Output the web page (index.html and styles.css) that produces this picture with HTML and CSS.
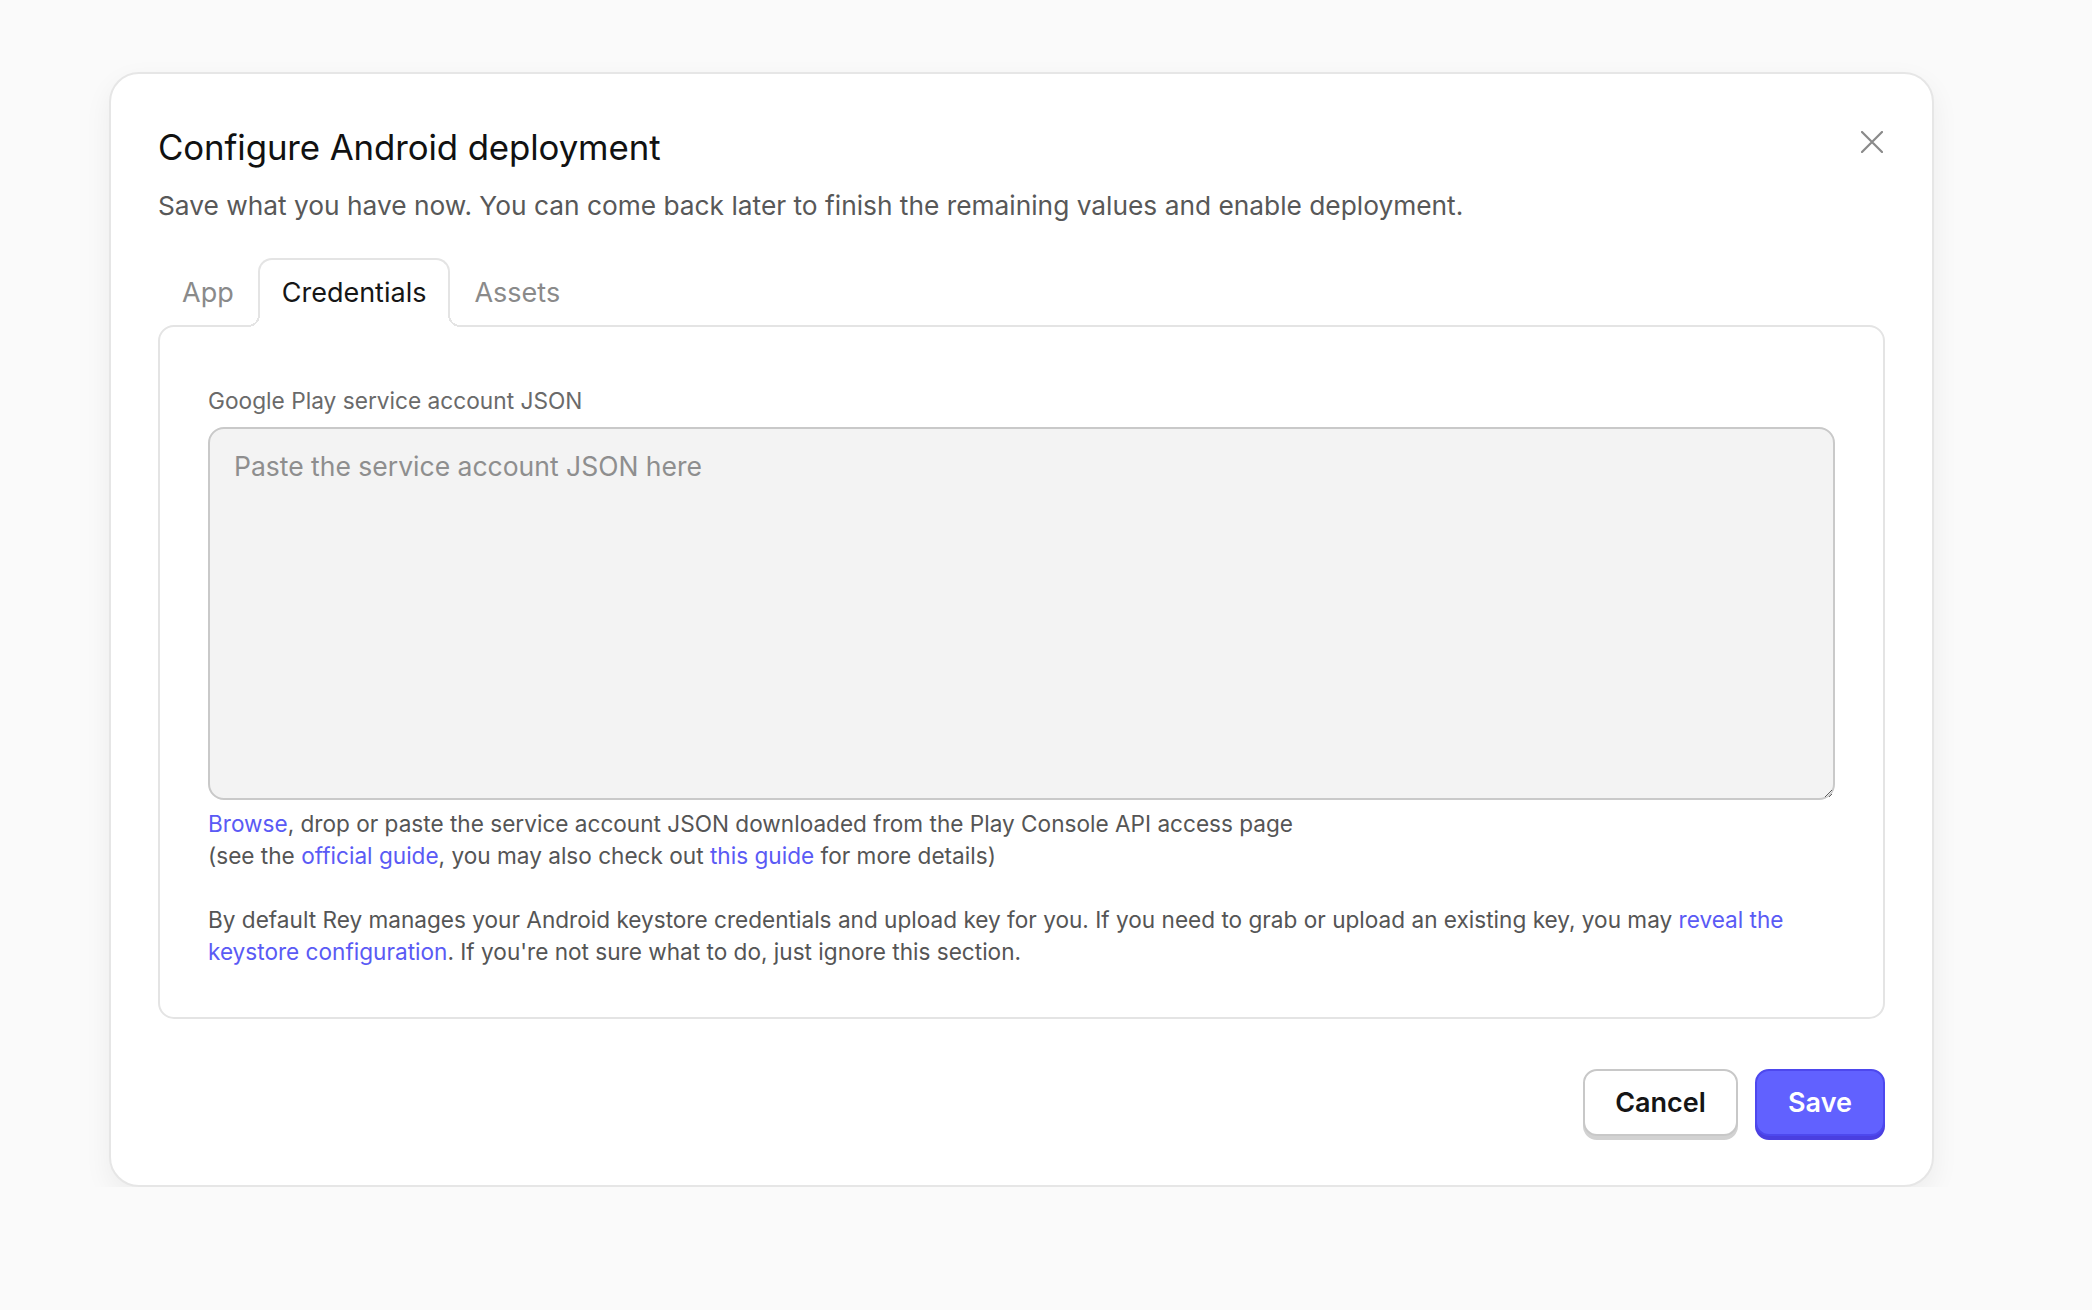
FILE: index.html
```html
<!DOCTYPE html>
<html lang="en">
<head>
<meta charset="utf-8">
<title>Configure Android deployment</title>
<link rel="stylesheet" href="styles.css">
</head>
<body>
<div class="modal">
  <button class="close" aria-label="Close">
    <svg width="22" height="22" viewBox="0 0 22 22"><path d="M1 1L21 21M21 1L1 21" stroke="#8a8a8a" stroke-width="2.2" stroke-linecap="round" fill="none"/></svg>
  </button>
  <h1 class="title">Configure Android deployment</h1>
  <p class="subtitle">Save what you have now. You can come back later to finish the remaining values and enable deployment.</p>
  <div class="tabs">
    <div class="tab">App</div>
    <div class="tab active">Credentials</div>
    <div class="tab">Assets</div>
  </div>
  <div class="panel">
    <label class="label">Google Play service account JSON</label>
    <textarea class="json" placeholder="Paste the service account JSON here"></textarea>
    <p class="help"><a>Browse</a>, drop or paste the service account JSON downloaded from the Play Console API access page<br>(see the <a>official guide</a>, you may also check out <a>this guide</a> for more details)</p>
    <p class="help note">By default Rey manages your Android keystore credentials and upload key for you. If you need to grab or upload an existing key, you may <a>reveal the keystore configuration</a>. If you're not sure what to do, just ignore this section.</p>
  </div>
  <div class="footer">
    <button class="btn cancel">Cancel</button>
    <button class="btn save">Save</button>
  </div>
</div>
</body>
</html>
```

FILE: styles.css
```css
* { box-sizing: border-box; }
html, body { margin: 0; padding: 0; }
body {
  background: #fafafa;
  font-family: Inter, "Noto Sans", sans-serif;
  color: #1a1a1a;
}
.modal {
  position: relative;
  margin: 72px 0 0 109px;
  width: 1825px;
  background: #fff;
  border: 2px solid #e6e6e6;
  border-radius: 30px;
  padding: 53px 47px 49px;
  box-shadow: 0 10px 28px rgba(0,0,0,0.06);
}
.close {
  position: absolute;
  top: 57px;
  right: 49px;
  width: 22px;
  height: 22px;
  padding: 0;
  border: 0;
  background: none;
  display: block;
}
.close svg { display: block; }
.title {
  margin: 0;
  font-size: 34.8px;
  line-height: 40px;
  font-weight: 400;
  color: #111;
  letter-spacing: -0.1px;
}
.subtitle {
  margin: 23px 0 0;
  font-size: 26.3px;
  line-height: 32px;
  color: #585858;
  font-weight: 400;
}
.tabs {
  display: flex;
  margin-top: 36px;
  position: relative;
  z-index: 2;
}
.tab {
  position: relative;
  padding: 17px 22px 18px;
  border: 2px solid transparent;
  border-bottom: 0;
  font-size: 27px;
  line-height: 32px;
  color: #8a8a8a;
  margin-bottom: -2px;
}
.tab.active {
  color: #161616;
  background: #fff;
  border-color: #e4e4e4;
  border-radius: 14px 14px 0 0;
}
.tab.active::before,
.tab.active::after {
  content: "";
  position: absolute;
  bottom: 0;
  width: 12px;
  height: 12px;
}
.tab.active::before {
  left: -12px;
  background: radial-gradient(circle at 0 0, transparent 10px, #e4e4e4 10px, #e4e4e4 12px, #fff 12px);
}
.tab.active::after {
  right: -12px;
  background: radial-gradient(circle at 100% 0, transparent 10px, #e4e4e4 10px, #e4e4e4 12px, #fff 12px);
}
.panel {
  position: relative;
  border: 2px solid #e4e4e4;
  border-radius: 16px;
  padding: 58px 48px 49px;
}
.label {
  display: block;
  font-size: 22.7px;
  line-height: 32px;
  color: #6a6a6a;
}
.json {
  display: block;
  width: 100%;
  height: 373px;
  margin-top: 10px;
  background: #f3f3f3;
  border: 2px solid #c9c9c9;
  border-radius: 16px;
  padding: 21px 24px 19px;
  font-family: Inter, "Noto Sans", sans-serif;
  font-size: 26.5px;
  line-height: 32px;
  color: #222;
  resize: vertical;
  outline: none;
}
.json::placeholder { color: #8e8e8e; }
.help {
  margin: 8px 0 0;
  font-size: 22.6px;
  line-height: 32px;
  color: #555;
}
.help.note { margin-top: 32px; }
.help a { color: #5a5af5; }
.footer {
  display: flex;
  justify-content: flex-end;
  gap: 17px;
  margin-top: 50px;
}
.btn {
  height: 67px;
  border-radius: 14px;
  font-family: Inter, "Noto Sans", sans-serif;
  font-size: 27px;
  font-weight: 600;
  padding: 0;
}
.cancel {
  width: 155px;
  background: #fff;
  color: #151515;
  border: 2px solid #c8c8c8;
  box-shadow: 0 4px 0 #d2d2d2;
}
.save {
  width: 130px;
  background: #6161ff;
  color: #fff;
  border: 2px solid #4d48ee;
  box-shadow: 0 4px 0 #4a3fe0;
}
```
